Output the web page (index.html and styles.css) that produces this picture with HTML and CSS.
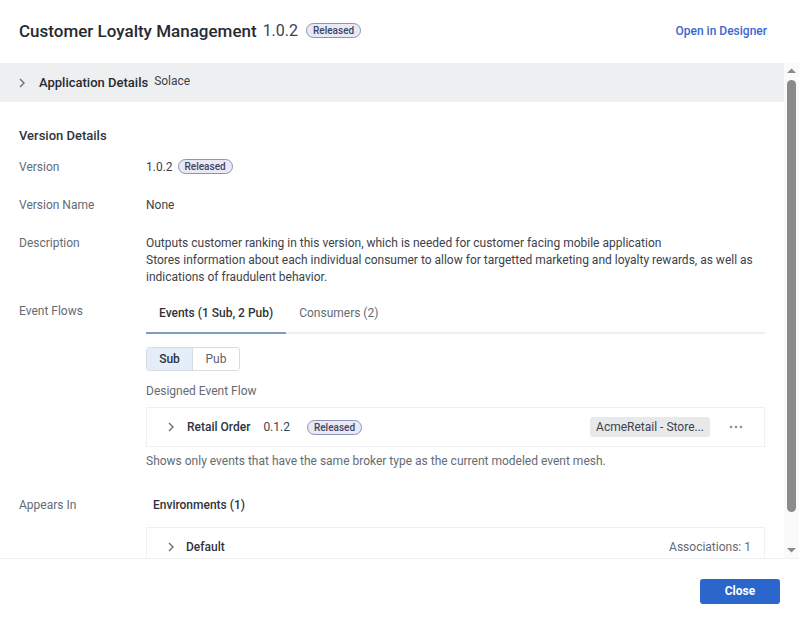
FILE: index.html
```html
<!DOCTYPE html>
<html>
<head>
<meta charset="utf-8">
<link rel="stylesheet" href="styles.css">
</head>
<body>
<div class="modal">
  <header class="header">
    <div class="title-wrap">
      <h1 class="title">Customer Loyalty Management</h1>
      <span class="title-ver">1.0.2</span>
      <span class="badge">Released</span>
    </div>
    <a class="link">Open in Designer</a>
  </header>
  <div class="scroll-wrap">
    <main class="body">
      <div class="accordion">
        <svg class="chev" width="8" height="10" viewBox="0 0 8 10"><path d="M2 1l4 4-4 4" fill="none" stroke="#6b6f76" stroke-width="1.4"/></svg>
        <span class="acc-title">Application Details</span>
        <span class="acc-sub">Solace</span>
      </div>
      <section class="section">
        <h2 class="section-title">Version Details</h2>
        <div class="row">
          <div class="label">Version</div>
          <div class="value"><span>1.0.2</span><span class="badge">Released</span></div>
        </div>
        <div class="row">
          <div class="label">Version Name</div>
          <div class="value">None</div>
        </div>
        <div class="row row-desc">
          <div class="label">Description</div>
          <div class="value desc">Outputs customer ranking in this version, which is needed for customer facing mobile application<br>Stores information about each individual consumer to allow for targetted marketing and loyalty rewards, as well as indications of fraudulent behavior.</div>
        </div>
        <div class="row row-flows">
          <div class="label">Event Flows</div>
          <div class="value">
            <div class="tabs">
              <div class="tab active">Events (1 Sub, 2 Pub)</div>
              <div class="tab">Consumers (2)</div>
            </div>
            <div class="toggle">
              <div class="tbtn on">Sub</div>
              <div class="tbtn">Pub</div>
            </div>
            <div class="muted sub-title">Designed Event Flow</div>
            <div class="card">
              <svg class="chev" width="8" height="10" viewBox="0 0 8 10"><path d="M2 1l4 4-4 4" fill="none" stroke="#6b6f76" stroke-width="1.4"/></svg>
              <span class="card-name">Retail Order</span>
              <span class="card-ver">0.1.2</span>
              <span class="badge">Released</span>
              <span class="spacer"></span>
              <span class="chip">AcmeRetail - Store...</span>
              <svg class="dots" width="14" height="4" viewBox="0 0 14 4"><circle cx="2" cy="2" r="1.3" fill="#8a8f96"/><circle cx="7" cy="2" r="1.3" fill="#8a8f96"/><circle cx="12" cy="2" r="1.3" fill="#8a8f96"/></svg>
            </div>
            <div class="muted note">Shows only events that have the same broker type as the current modeled event mesh.</div>
          </div>
        </div>
        <div class="row row-appears">
          <div class="label">Appears In</div>
          <div class="value">
            <div class="env-title">Environments (1)</div>
            <div class="card env-card">
              <svg class="chev" width="8" height="10" viewBox="0 0 8 10"><path d="M2 1l4 4-4 4" fill="none" stroke="#6b6f76" stroke-width="1.4"/></svg>
              <span class="card-name">Default</span>
              <span class="spacer"></span>
              <span class="assoc">Associations: 1</span>
            </div>
          </div>
        </div>
      </section>
    </main>
    <div class="scrollbar" aria-hidden="true">
      <svg class="sb-arrow" width="15" height="15" viewBox="0 0 15 15"><path d="M3 10h9L7.5 5.5z" fill="#8a8a8a"/></svg>
      <div class="sb-track"><div class="sb-thumb"></div></div>
      <svg class="sb-arrow" width="15" height="15" viewBox="0 0 15 15"><path d="M3 5h9L7.5 9.5z" fill="#8a8a8a"/></svg>
    </div>
  </div>
  <footer class="footer">
    <button class="btn">Close</button>
  </footer>
</div>
</body>
</html>
```

FILE: styles.css
```css
* { box-sizing: border-box; }
html, body { margin: 0; padding: 0; }
body {
  font-family: Roboto, "Noto Sans", sans-serif;
  font-size: 12px;
  color: #3c424b;
  background: #fff;
}
.modal {
  width: 799px;
  height: 623px;
  display: flex;
  flex-direction: column;
}
.header {
  height: 63px;
  flex: none;
  display: flex;
  align-items: center;
  justify-content: space-between;
  padding: 0 32px 2px 19px;
}
.title-wrap { display: flex; align-items: center; gap: 6px; }
.title { margin: 0; font-size: 17px; font-weight: 500; color: #262a31; }
.title-ver { font-size: 16px; color: #3c424b; margin-right: 2px; }
.badge {
  display: inline-flex;
  align-items: center;
  height: 15px;
  padding: 0 6px;
  border: 1px solid #8d92b8;
  background: #e8e9f3;
  color: #3d4469;
  border-radius: 8px;
  font-size: 10px;
  font-weight: 500;
}
.link { color: #3a68cd; font-weight: 500; font-size: 12px; }
.scroll-wrap {
  flex: 1;
  min-height: 0;
  display: flex;
}
.body {
  flex: 1;
  min-width: 0;
  overflow: hidden;
}
.scrollbar {
  width: 15px;
  flex: none;
  background: #fafafa;
  display: flex;
  flex-direction: column;
}
.sb-arrow { flex: none; display: block; }
.sb-track { flex: 1; padding: 2px 3px 31px; display: flex; }
.sb-thumb { flex: 1; background: #8b8b8b; border-radius: 5px; }
.accordion {
  height: 39px;
  background: #eeeff1;
  display: flex;
  align-items: center;
  padding-left: 18px;
}
.accordion .chev { margin-right: 13px; }
.acc-title { font-size: 13px; font-weight: 500; color: #262a31; margin-right: 6px; }
.acc-sub { font-size: 12px; color: #3c424b; margin-bottom: 3px; }
.section { padding: 24px 19px 0 19px; }
.section-title { margin: 0 0 13px; font-size: 13px; font-weight: 500; color: #2f343b; line-height: 20px; }
.row {
  display: grid;
  grid-template-columns: 127px 1fr;
  line-height: 17px;
  margin-bottom: 21px;
}
.row-desc { margin-bottom: 17px; }
.label { color: #646b74; }
.value { color: #3c424b; min-width: 0; }
.value .badge { margin-left: 5px; vertical-align: 1px; }
.row-flows { margin-bottom: 27px; }
.tabs {
  display: flex;
  border-bottom: 2px solid #eeeff1;
}
.tab {
  padding: 2px 13px 10px;
  color: #646b74;
  margin-bottom: -2px;
  border-bottom: 2px solid transparent;
}
.tab.active { color: #2f343b; font-weight: 500; border-bottom-color: #7f9cc4; }
.toggle {
  display: inline-flex;
  margin-top: 13px;
  border: 1px solid #d9dce1;
  border-radius: 3px;
  overflow: hidden;
}
.tbtn {
  width: 46px;
  height: 22px;
  display: flex;
  align-items: center;
  justify-content: center;
  color: #5d636b;
}
.tbtn.on { background: #e5eef8; font-weight: 500; color: #2f343b; border-right: 1px solid #d9dce1; }
.muted { color: #646b74; }
.sub-title { margin-top: 12px; }
.card {
  height: 40px;
  border: 1px solid #eff0f2;
  display: flex;
  align-items: center;
  padding-left: 20px;
  padding-right: 21px;
  margin-top: 7px;
}
.card .chev { margin-right: 12px; }
.card-name { font-weight: 500; color: #2f343b; margin-right: 13px; }
.card-ver { margin-right: 12px; }
.spacer { flex: 1; }
.chip {
  background: #e8e9eb;
  padding: 0 6px;
  height: 20px;
  line-height: 20px;
  border-radius: 3px;
  color: #3c424b;
  margin-right: 19px;
}
.note { margin-top: 6px; }
.env-title { font-weight: 500; color: #2f343b; padding-left: 7px; margin-bottom: 13px; }
.env-card { margin-top: 0; padding-right: 13px; }
.env-card .chev { margin-right: 11px; }
.assoc { color: #646b74; }
.footer {
  height: 65px;
  flex: none;
  border-top: 1px solid #eeeff1;
  display: flex;
  align-items: center;
  justify-content: flex-end;
  padding-right: 19px;
}
.btn {
  width: 80px;
  height: 25px;
  background: #2a66cc;
  color: #fff;
  border: none;
  border-radius: 3px;
  font-family: inherit;
  font-weight: 700;
  font-size: 12px;
}
```
